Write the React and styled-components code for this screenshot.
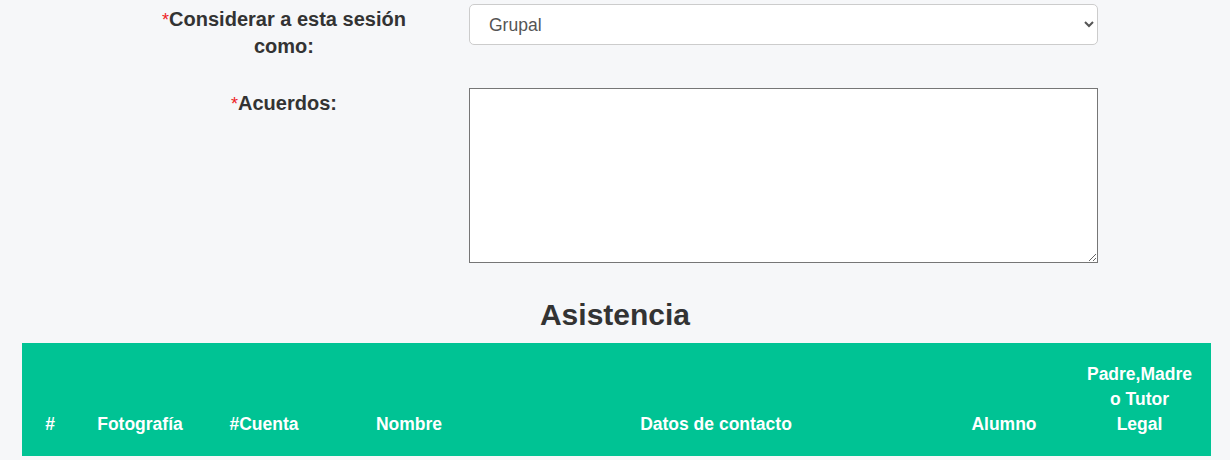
import React from "react";
import styled, { createGlobalStyle } from "styled-components";

const GlobalStyle = createGlobalStyle`
  html, body {
    margin: 0;
    padding: 0;
    background: #f6f7f9;
    font-family: "Liberation Sans", Arial, sans-serif;
    color: #333;
  }
`;

const Page = styled.div`
  padding-top: 4px;
`;

const FormGroup = styled.div`
  display: grid;
  grid-template-columns: 270px 629px;
  column-gap: 50px;
  padding-left: 149px;
  align-items: start;
  margin-bottom: ${(p) => p.$space || 0}px;
`;

const Label = styled.label`
  padding-top: 2px;
  font-size: 20px;
  line-height: 26px;
  font-weight: bold;
  text-align: center;
  color: #333;
`;

const Required = styled.span`
  color: #ee1c25;
  font-weight: normal;
  font-size: 18px;
`;

const Select = styled.select`
  box-sizing: border-box;
  width: 100%;
  height: 41px;
  padding: 0 14px 0 15px;
  font-family: "Liberation Sans", Arial, sans-serif;
  font-size: 17.5px;
  color: #555;
  background: #fff;
  border: 1px solid #ccc;
  border-radius: 5px;
`;

const TextArea = styled.textarea`
  box-sizing: border-box;
  display: block;
  width: 100%;
  height: 175px;
  margin: 0;
  border: 1px solid #767676;
  background: #fff;
  font-family: "Liberation Sans", Arial, sans-serif;
  font-size: 17.5px;
`;

const Title = styled.h3`
  margin: 35px 0 12px;
  font-size: 30px;
  line-height: 33px;
  font-weight: bold;
  text-align: center;
  color: #333;
`;

const Table = styled.table`
  margin-left: 22px;
  width: 1189px;
  table-layout: fixed;
  border-collapse: collapse;
`;

const HeadRow = styled.tr`
  background: #00c394;
`;

const Th = styled.th`
  padding: 19px ${(p) => p.$pad || 6}px;
  vertical-align: bottom;
  text-align: center;
  color: #fff;
  font-size: 17.5px;
  line-height: 25px;
  font-weight: bold;
`;

const columns = [
  { label: "#", width: 56 },
  { label: "Fotografía", width: 124 },
  { label: "#Cuenta", width: 124 },
  { label: "Nombre", width: 166 },
  { label: "Datos de contacto", width: 448 },
  { label: "Alumno", width: 128 },
  { label: "Padre,Madre o Tutor Legal", width: 143, pad: 18 },
];

const App = () => (
  <Page>
    <GlobalStyle />
    <FormGroup $space={29}>
      <Label>
        <Required>*</Required>Considerar a esta sesión como:
      </Label>
      <Select defaultValue="Grupal">
        <option>Grupal</option>
        <option>Individual</option>
      </Select>
    </FormGroup>
    <FormGroup>
      <Label>
        <Required>*</Required>Acuerdos:
      </Label>
      <TextArea />
    </FormGroup>
    <Title>Asistencia</Title>
    <Table>
      <colgroup>
        {columns.map((c) => (
          <col key={c.label} style={{ width: c.width }} />
        ))}
      </colgroup>
      <thead>
        <HeadRow>
          {columns.map((c) => (
            <Th key={c.label} $pad={c.pad}>
              {c.label}
            </Th>
          ))}
        </HeadRow>
      </thead>
    </Table>
  </Page>
);

export default App;
